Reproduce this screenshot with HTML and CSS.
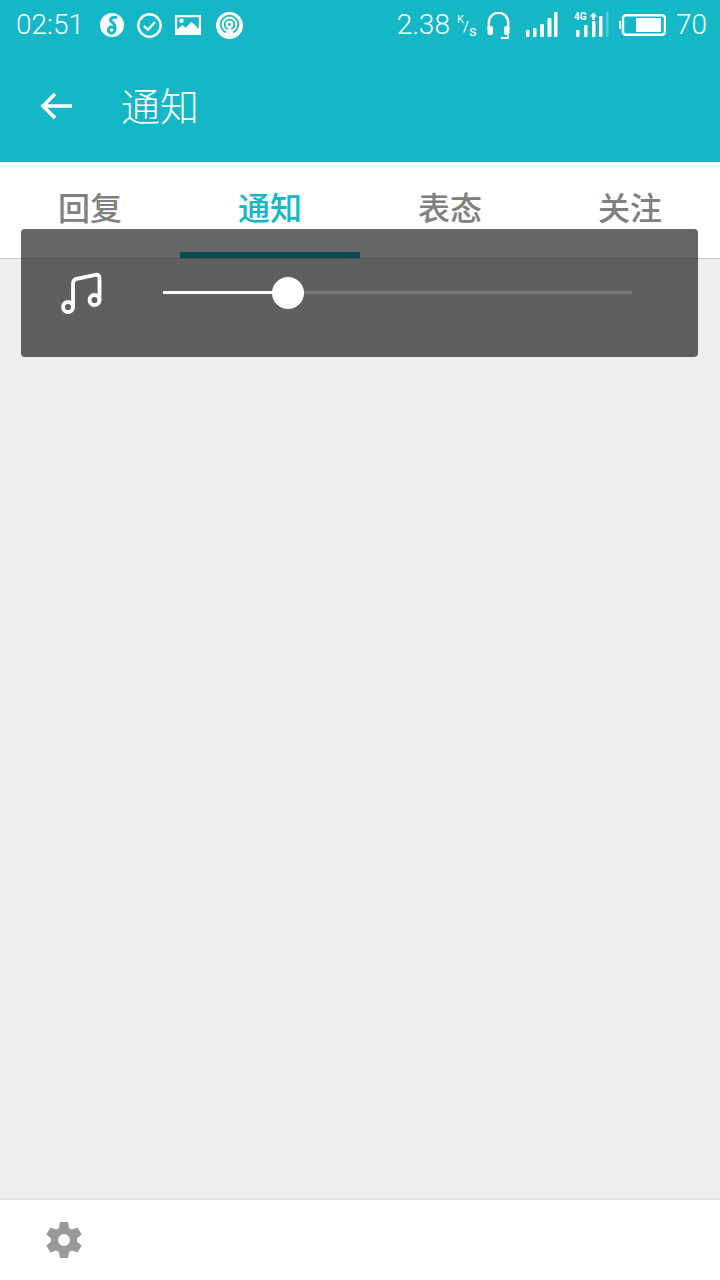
FILE: index.html
```html
<!DOCTYPE html>
<html lang="zh">
<head>
<meta charset="utf-8">
<title>通知</title>
<link rel="stylesheet" href="styles.css">
</head>
<body>
<div class="app">
  <header class="header">
    <div class="status">
      <div class="status-group">
        <span class="time">02:51</span>
        <svg class="ic ic-a" viewBox="0 0 24 24"><circle cx="12" cy="12" r="12" fill="#fff"/><path d="M17 4.500c-3.500-1-6.500.3-6.500 2.500 0 2.500 4.500 3 4.500 6.500v3.500" fill="none" stroke="#13b7c6" stroke-width="3"/><circle cx="11.500" cy="17" r="3.200" fill="#fff" stroke="#13b7c6" stroke-width="2.800"/></svg>
        <svg class="ic ic-b" viewBox="0 0 25 25"><circle cx="12.500" cy="12.500" r="11.200" fill="none" stroke="#fff" stroke-width="2.400"/><path d="M7 13l4 3.800 7-7.800" fill="none" stroke="#fff" stroke-width="2.400"/></svg>
        <svg class="ic ic-c" viewBox="0 0 26 20"><path fill="#fff" fill-rule="evenodd" d="M0 0h26v20H0zM2.200 2.200v12.300l5.300-4.500 3 2.800 6-6 7.300 7.200V2.200z"/><circle cx="6.500" cy="5.800" r="2.200" fill="#fff"/></svg>
        <svg class="ic ic-d" viewBox="0 0 27 27"><circle cx="13.500" cy="13.500" r="13.500" fill="#fff"/><circle cx="13.500" cy="12.500" r="8.800" fill="none" stroke="#13b7c6" stroke-width="1.800"/><circle cx="13.500" cy="12.500" r="4.800" fill="none" stroke="#13b7c6" stroke-width="1.800"/><circle cx="13.500" cy="12.500" r="1.400" fill="#13b7c6"/><path d="M8 24l5.500-10 5.500 10z" fill="#fff"/></svg>
      </div>
      <div class="status-group">
        <span class="speed">2.38</span>
        <span class="unit"><span class="unit-k">K</span><span class="unit-slash">/</span><span class="unit-s">s</span></span>
        <svg class="ic ic-head" viewBox="0 0 23 27"><path d="M1.800 17V10.500a9.700 9.700 0 0 1 19.400 0v6.500" fill="none" stroke="#fff" stroke-width="2.400"/><rect x="0.500" y="14" width="5.500" height="9" rx="2" fill="#fff"/><rect x="17" y="14" width="5.500" height="9" rx="2" fill="#fff"/><path d="M21 23v3h-7" fill="none" stroke="#fff" stroke-width="1.800"/></svg>
        <svg class="ic ic-sig" viewBox="0 0 33 26"><g fill="#fff"><rect x="1" y="18" width="3.500" height="7" rx="1"/><rect x="8" y="16" width="3.500" height="9" rx="1"/><rect x="15" y="12" width="4" height="13" rx="1"/><rect x="22.500" y="6" width="4" height="19" rx="1"/><rect x="29" y="0" width="3.500" height="25" rx="1"/></g></svg>
        <span class="sig2">
          <span class="net">4G</span>
          <svg class="ic ic-sig2" viewBox="0 0 35 26"><g fill="#fff"><path d="M19.500 0.500l3.500 4h-2.300v3.500h-2.400V4.500H16z"/><rect x="2" y="18" width="3.500" height="7" rx="1"/><rect x="10" y="13" width="3.500" height="12" rx="1"/><rect x="18" y="9" width="3.500" height="16" rx="1"/><rect x="25" y="4" width="3.500" height="21" rx="1"/></g><rect x="32" y="0" width="2.500" height="25" fill="#fff" opacity=".3"/></svg>
        </span>
        <svg class="ic ic-batt" viewBox="0 0 47 22"><rect x="0" y="7" width="2" height="8" fill="#fff"/><rect x="4" y="1.200" width="42" height="19.600" rx="3" fill="none" stroke="#fff" stroke-width="2.400"/><rect x="17" y="4" width="25" height="14" fill="#fff"/></svg>
        <span class="batt-num">70</span>
      </div>
    </div>
    <div class="toolbar">
      <svg class="back" viewBox="0 0 34 30"><path d="M33 15H4M16 3L4 15l12 12" fill="none" stroke="#fff" stroke-width="3.600"/></svg>
      <h1 class="title">通知</h1>
    </div>
  </header>
  <nav class="tabs">
    <div class="tab">回复</div>
    <div class="tab tab-active">通知</div>
    <div class="tab">表态</div>
    <div class="tab">关注</div>
  </nav>
  <main class="content"></main>
  <footer class="footer">
    <svg class="gear" viewBox="0 0 36 36"><g fill="#999"><circle cx="18" cy="18" r="13"/><path d="M14 0h8l1.500 8h-11z"/><path d="M14 0h8l1.500 8h-11z" transform="rotate(60 18 18)"/><path d="M14 0h8l1.500 8h-11z" transform="rotate(120 18 18)"/><path d="M14 0h8l1.500 8h-11z" transform="rotate(180 18 18)"/><path d="M14 0h8l1.500 8h-11z" transform="rotate(240 18 18)"/><path d="M14 0h8l1.500 8h-11z" transform="rotate(300 18 18)"/></g><circle cx="18" cy="18" r="6" fill="#fff"/></svg>
  </footer>
  <div class="volume">
    <svg class="note" viewBox="0 0 42 46"><path d="M13 37V14q0-5 5-5.500L35.500 4.800q4-.5 4 3.500V30" fill="none" stroke="#fff" stroke-width="3.800" stroke-linecap="round"/><circle cx="8" cy="37" r="5" fill="none" stroke="#fff" stroke-width="3.800"/><circle cx="34.500" cy="30" r="5" fill="none" stroke="#fff" stroke-width="3.800"/></svg>
    <div class="slider">
      <div class="slider-fill"></div>
      <div class="slider-thumb"></div>
      <div class="slider-rest"></div>
    </div>
  </div>
</div>
</body>
</html>
```
FILE: styles.css
```css
* { box-sizing: border-box; }
html, body { margin: 0; padding: 0; }
body { font-family: Roboto, "Noto Sans CJK SC", sans-serif; background: #eee; }
.app { position: relative; width: 720px; height: 1280px; display: flex; flex-direction: column; overflow: hidden; }
.header { background: #13b7c6; height: 162px; color: #fff; flex: none; }
.status { height: 50px; display: flex; justify-content: space-between; align-items: center; padding: 0 13px 0 16px; }
.status-group { display: flex; align-items: center; }
.time, .speed, .batt-num { font-size: 28px; font-weight: 300; line-height: 50px; }
.ic { display: block; flex: none; }
.ic-a { width: 24px; height: 24px; margin-left: 16px; }
.ic-b { width: 25px; height: 25px; margin-left: 13px; }
.ic-c { width: 26px; height: 20px; margin-left: 13px; }
.ic-d { width: 27px; height: 27px; margin-left: 15px; }
.unit { position: relative; width: 20px; height: 26px; margin-left: 7px; font-weight: 400; }
.unit-k { position: absolute; left: 0; top: 2px; line-height: 12px; font-size: 11px; }
.unit-slash { position: absolute; left: 6px; top: 8px; line-height: 14px; font-size: 14px; }
.unit-s { position: absolute; left: 12px; top: 12px; line-height: 14px; font-size: 15px; }
.ic-head { width: 23px; height: 27px; margin-left: 10px; }
.ic-sig { width: 33px; height: 26px; margin-left: 15px; }
.sig2 { position: relative; display: block; width: 35px; height: 26px; margin-left: 16px; }
.net { position: absolute; left: 0; top: 0; font-size: 10px; font-weight: 700; line-height: 10px; }
.ic-sig2 { width: 35px; height: 26px; }
.ic-batt { width: 47px; height: 22px; margin-left: 10px; }
.batt-num { margin-left: 10px; }
.toolbar { height: 112px; display: flex; align-items: center; padding: 0 0 0 39px; }
.back { width: 34px; height: 30px; }
.title { margin: 0 0 4px 48px; font-size: 39px; font-weight: 300; line-height: 48px; font-family: "Noto Sans CJK SC", sans-serif; }
.tabs { height: 97px; flex: none; display: grid; grid-template-columns: repeat(4, 180px); background: #fff; border-bottom: 1px solid #ccc; }
.tab { height: 96px; text-align: center; font-family: "Noto Sans CJK SC", sans-serif; font-size: 32px; font-weight: 500; line-height: 88px; color: #808080; opacity: .999; }
.tab-active { color: #13b7c6; border-bottom: 6px solid #13b7c6; }
.content { flex: 1; background: #eee; }
.footer { height: 80px; flex: none; background: #fff; box-shadow: 0 -1px 2px rgba(0,0,0,.08); display: flex; align-items: center; padding-left: 46px; }
.gear { width: 36px; height: 36px; }
.volume { position: absolute; left: 21px; top: 229px; width: 677px; height: 128px; background: rgba(0,0,0,.6); border-radius: 4px; display: flex; align-items: center; padding: 0 66px 0 142px; }
.note { position: absolute; left: 39px; top: 41px; width: 42px; height: 46px; }
.slider { flex: 1; display: flex; align-items: center; }
.slider-fill { width: 110px; height: 3px; margin-bottom: 1px; background: #fff; }
.slider-thumb { width: 32px; height: 32px; margin-left: -1px; border-radius: 50%; background: #fff; flex: none; }
.slider-rest { flex: 1; height: 3px; margin-bottom: 1px; background: #7a7a7a; }
```
